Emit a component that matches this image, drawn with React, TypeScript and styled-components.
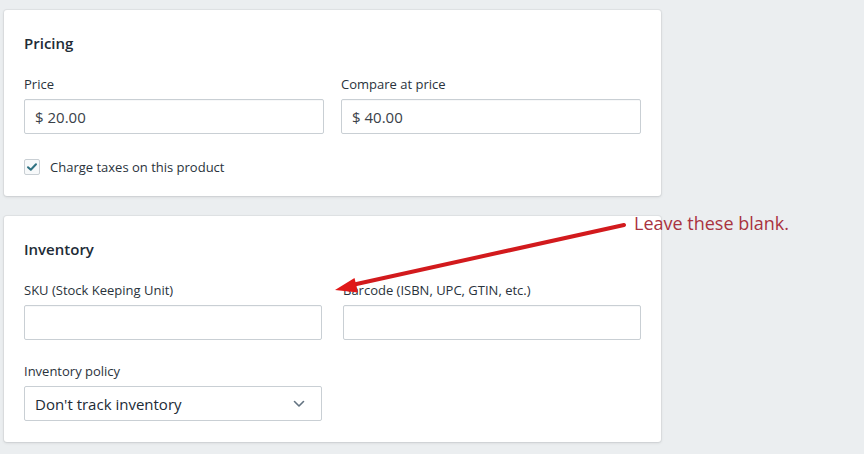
import styled, { createGlobalStyle } from "styled-components";

const GlobalStyle = createGlobalStyle`
  html, body {
    margin: 0;
    padding: 0;
    background: #ebeef0;
  }
  body {
    font-family: "Open Sans", "Noto Sans", sans-serif;
    color: #212b36;
  }
`;

function App() {
  return (
    <Page>
      <GlobalStyle />
      <Cards>
        <Card $bottom={20}>
          <CardTitle>Pricing</CardTitle>
          <Row $gap={17}>
            <Field>
              <Label>Price</Label>
              <TextInput readOnly defaultValue="$ 20.00" />
            </Field>
            <Field>
              <Label>Compare at price</Label>
              <TextInput readOnly defaultValue="$ 40.00" />
            </Field>
          </Row>
          <CheckRow>
            <CheckBox>
              <svg width="12" height="12" viewBox="0 0 12 12">
                <path
                  d="M2 6.2 L4.8 8.8 L10 3.2"
                  fill="none"
                  stroke="#2f7282"
                  strokeWidth="2"
                  strokeLinecap="round"
                  strokeLinejoin="round"
                />
              </svg>
            </CheckBox>
            <CheckLabel>Charge taxes on this product</CheckLabel>
          </CheckRow>
        </Card>
        <Card $bottom={21}>
          <CardTitle>Inventory</CardTitle>
          <Row $gap={21}>
            <Field>
              <Label>SKU (Stock Keeping Unit)</Label>
              <TextInput readOnly defaultValue="" />
            </Field>
            <Field>
              <Label>Barcode (ISBN, UPC, GTIN, etc.)</Label>
              <TextInput readOnly defaultValue="" />
            </Field>
          </Row>
          <PolicyRow $gap={21}>
            <Field>
              <Label>Inventory policy</Label>
              <SelectBox>
                <span>Don't track inventory</span>
                <svg width="12" height="8" viewBox="0 0 12 8">
                  <path
                    d="M1.5 1.5 L6 6 L10.5 1.5"
                    fill="none"
                    stroke="#637381"
                    strokeWidth="1.6"
                    strokeLinecap="round"
                    strokeLinejoin="round"
                  />
                </svg>
              </SelectBox>
            </Field>
            <div />
          </PolicyRow>
        </Card>
      </Cards>

      <Arrow width="864" height="454" viewBox="0 0 864 454">
        <line
          x1="624"
          y1="225"
          x2="352"
          y2="285"
          stroke="#d21a1d"
          strokeWidth="4"
          strokeLinecap="round"
        />
        <polygon points="335,290 358,292.5 354.5,278" fill="#e01818" />
      </Arrow>
      <Note>Leave these blank.</Note>
    </Page>
  );
}
export default App;

export const Page = styled.div`
  position: relative;
  width: 864px;
  height: 454px;
  overflow: hidden;
  box-sizing: border-box;
  padding: 10px 0 0 4px;
`;

export const Cards = styled.div`
  display: flex;
  flex-direction: column;
  gap: 20px;
  width: 657px;
`;

export const Card = styled.div<{ $bottom: number }>`
  background: #ffffff;
  border-radius: 3px;
  box-shadow: 0 0 0 1px rgba(63, 63, 68, 0.05),
    0 1px 3px 0 rgba(63, 63, 68, 0.15);
  padding: 23px 20px ${(p) => p.$bottom}px;
  display: flex;
  flex-direction: column;
`;

export const CardTitle = styled.h2`
  margin: 0 0 22px;
  font-size: 15px;
  line-height: 20px;
  font-weight: 600;
  color: #212b36;
`;

export const Row = styled.div<{ $gap: number }>`
  display: grid;
  grid-template-columns: 1fr 1fr;
  column-gap: ${(p) => p.$gap}px;
`;

export const PolicyRow = styled(Row)`
  margin-top: 22px;
`;

export const Field = styled.div`
  display: flex;
  flex-direction: column;
  gap: 6px;
`;

export const Label = styled.label`
  font-size: 13px;
  line-height: 18px;
  color: #2a333c;
`;

export const TextInput = styled.input`
  box-sizing: border-box;
  width: 100%;
  height: 35px;
  margin: 0;
  padding: 0 10px;
  border: 1px solid #c9cfd4;
  border-radius: 2px;
  background: #fff;
  font-family: "Open Sans", "Noto Sans", sans-serif;
  font-size: 15px;
  color: #3a4148;
  outline: none;
  box-shadow: inset 0 1px 0 0 rgba(99, 115, 129, 0.05);
`;

export const CheckRow = styled.div`
  display: flex;
  align-items: center;
  gap: 10px;
  margin-top: 24px;
`;

export const CheckBox = styled.span`
  box-sizing: border-box;
  width: 16px;
  height: 16px;
  border: 1px solid #c9cfd4;
  border-radius: 2px;
  background: #f7f9fa;
  display: flex;
  align-items: center;
  justify-content: center;
`;

export const CheckLabel = styled.span`
  font-size: 13px;
  line-height: 18px;
  color: #2a333c;
`;

export const SelectBox = styled.div`
  box-sizing: border-box;
  height: 35px;
  padding: 0 16px 0 10px;
  border: 1px solid #c9cfd4;
  border-radius: 2px;
  background: #fff;
  display: flex;
  align-items: center;
  justify-content: space-between;
  font-size: 15px;
  color: #212b36;
`;

export const Arrow = styled.svg`
  position: absolute;
  left: 0;
  top: 0;
  pointer-events: none;
`;

export const Note = styled.div`
  position: absolute;
  left: 634px;
  top: 210px;
  font-family: "Open Sans", "Noto Sans", sans-serif;
  font-size: 18px;
  line-height: 26px;
  color: #a9333f;
`;
